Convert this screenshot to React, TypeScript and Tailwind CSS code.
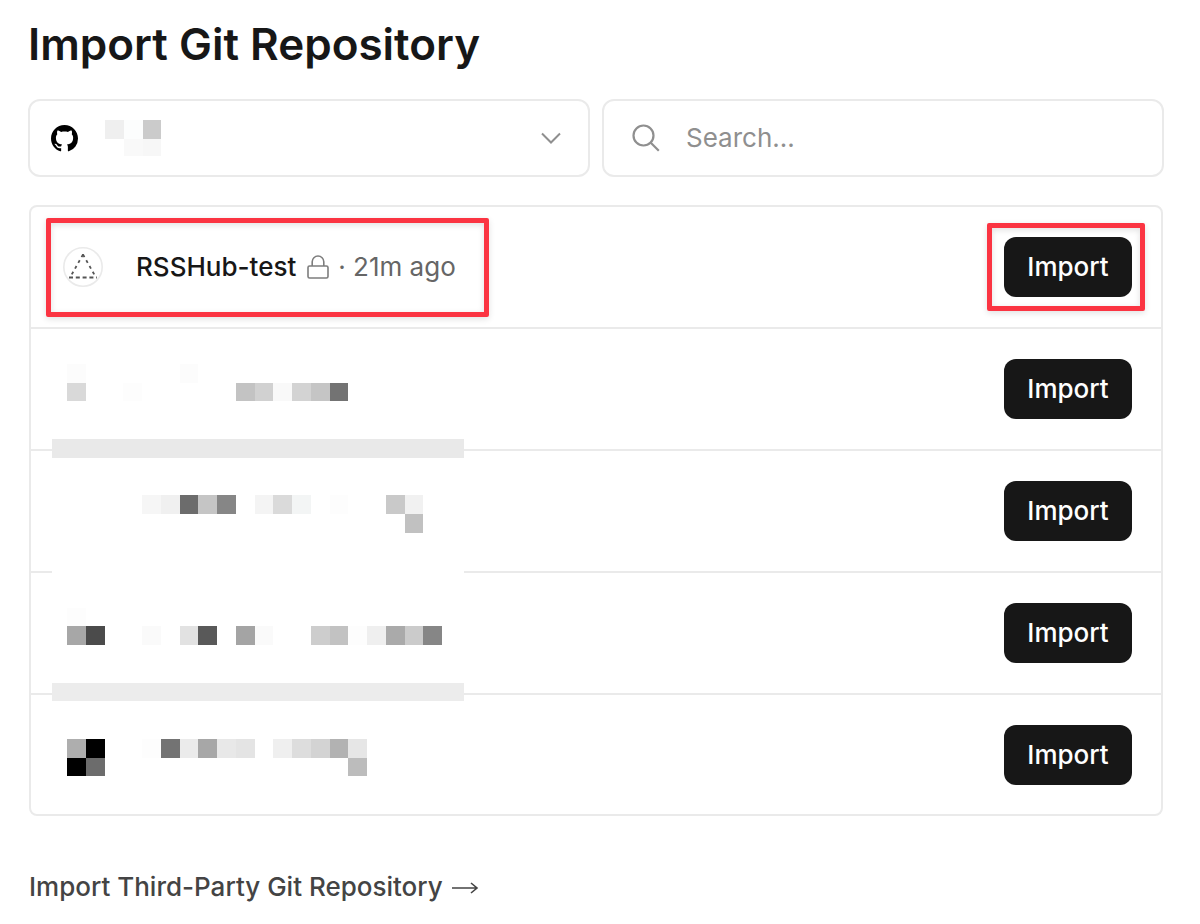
import React from 'react';

type Cell = [col: number, row: number, fill: string];

// Pixelated blocks hiding the account name
const accountCells: Cell[] = [
  [0, 0, '#efefef'],
  [1, 0, '#fcfdfd'],
  [2, 0, '#cbcbcb'],
  [1, 1, '#f9f9f9'],
  [2, 1, '#f7f7f7'],
];

// Pixelated blocks hiding the private repositories
const repoCells: Cell[] = [
  [0, 0, '#fcfcfc'],
  [6, 0, '#fcfcfc'],
  [0, 1, '#d9d9d9'],
  [3, 1, '#fdfdfd'],
  [9, 1, '#c3c3c3'],
  [10, 1, '#d1d1d1'],
  [11, 1, '#f9f9f9'],
  [12, 1, '#d3d3d3'],
  [13, 1, '#c5c5c5'],
  [14, 1, '#737373'],
  [4, 7, '#f6f6f6'],
  [5, 7, '#f0f0f0'],
  [6, 7, '#6c6c6c'],
  [7, 7, '#c5c5c5'],
  [8, 7, '#868686'],
  [10, 7, '#f4f4f4'],
  [11, 7, '#dadada'],
  [12, 7, '#f3f5f5'],
  [14, 7, '#fdfdfd'],
  [17, 7, '#c9c9c9'],
  [18, 7, '#f1f1f1'],
  [18, 8, '#c1c1c1'],
  [0, 13, '#fdfdfd'],
  [0, 14, '#a7a7a7'],
  [1, 14, '#4b4b4b'],
  [4, 14, '#fafafa'],
  [6, 14, '#e2e2e2'],
  [7, 14, '#595959'],
  [9, 14, '#a4a4a4'],
  [10, 14, '#fafafa'],
  [13, 14, '#cdcdcd'],
  [14, 14, '#c2c2c2'],
  [15, 14, '#fdfdfd'],
  [16, 14, '#efefef'],
  [17, 14, '#aaaaaa'],
  [18, 14, '#cbcbcb'],
  [19, 14, '#868686'],
  [0, 20, '#aeaeae'],
  [1, 20, '#000000'],
  [0, 21, '#000000'],
  [1, 21, '#6c6c6c'],
  [4, 20, '#fdfdfd'],
  [5, 20, '#737373'],
  [6, 20, '#ebebeb'],
  [7, 20, '#a7a7a7'],
  [8, 20, '#e8e8e8'],
  [9, 20, '#e4e4e4'],
  [11, 20, '#efefef'],
  [12, 20, '#dddddd'],
  [13, 20, '#d3d3d3'],
  [14, 20, '#b2b2b2'],
  [15, 20, '#e6e6e6'],
  [15, 21, '#bcbcbc'],
];

const Cells: React.FC<{ cells: Cell[] }> = ({ cells }) => (
  <>
    {cells.map(([col, row, fill]) => (
      <rect key={`${col}-${row}`} x={col} y={row} width="1" height="1" fill={fill} />
    ))}
  </>
);

const GithubMark: React.FC = () => (
  <svg className="size-[27px] shrink-0" viewBox="0 0 16 16" aria-hidden="true">
    <path
      fill="#000"
      d="M8 0C3.58 0 0 3.58 0 8c0 3.54 2.29 6.53 5.47 7.59.4.07.55-.17.55-.38 0-.19-.01-.82-.01-1.49-2.01.37-2.53-.49-2.69-.94-.09-.23-.48-.94-.82-1.13-.28-.15-.68-.52-.01-.53.63-.01 1.08.58 1.23.82.72 1.21 1.87.87 2.33.66.07-.52.28-.87.51-1.07-1.78-.2-3.64-.89-3.64-3.95 0-.87.31-1.59.82-2.15-.08-.2-.36-1.02.08-2.12 0 0 .67-.21 2.2.82.64-.18 1.32-.27 2-.27.68 0 1.36.09 2 .27 1.53-1.04 2.2-.82 2.2-.82.44 1.1.16 1.92.08 2.12.51.56.82 1.27.82 2.15 0 3.07-1.87 3.75-3.65 3.95.29.25.54.73.54 1.48 0 1.07-.01 1.93-.01 2.2 0 .21.15.46.55.38A8.013 8.013 0 0016 8c0-4.42-3.58-8-8-8z"
    />
  </svg>
);

const ImportButton: React.FC = () => (
  <button
    type="button"
    className="h-[60px] w-32 rounded-xl bg-[#171717] text-[26px] leading-8 font-medium text-white hover:bg-[#383838]"
  >
    Import
  </button>
);

const App: React.FC = () => {
  return (
    <main className="bg-white pt-4 pr-9 pb-5 pl-7 font-['Inter',sans-serif] text-[#171717]">
      <h1 className="text-[44px] leading-14 font-semibold">Import Git Repository</h1>

      {/* Account and search */}
      <div className="mt-[27px] grid grid-cols-2 gap-3">
        <div className="relative flex h-[78px] items-center rounded-xl border-2 border-[#eaeaea] px-[21px]">
          <GithubMark />
          <select
            aria-label="Git account"
            className="absolute inset-0 size-full cursor-pointer appearance-none rounded-xl bg-transparent"
          >
            <option value="github"></option>
          </select>
          <svg
            className="ml-[27px] h-9 w-14"
            viewBox="0 0 3 1.9"
            preserveAspectRatio="xMinYMin slice"
            shapeRendering="crispEdges"
            aria-hidden="true"
          >
            <Cells cells={accountCells} />
          </svg>
          <svg
            className="mr-[6px] ml-auto h-3 w-5"
            viewBox="0 0 20 12"
            fill="none"
            stroke="#8f8f8f"
            strokeWidth="2"
            aria-hidden="true"
          >
            <path d="M1 1.5l9 9 9-9" />
          </svg>
        </div>

        <label className="flex h-[78px] items-center rounded-xl border-2 border-[#eaeaea] px-7">
          <svg
            className="size-7 shrink-0"
            viewBox="0 0 28 28"
            fill="none"
            stroke="#8f8f8f"
            strokeWidth="2.2"
            aria-hidden="true"
          >
            <circle cx="11.5" cy="11.5" r="10" />
            <path d="M18.5 18.5l8.3 8.3" />
          </svg>
          <input
            type="text"
            aria-label="Search repositories"
            placeholder="Search..."
            className="ml-[26px] w-full min-w-0 bg-transparent text-[26px] leading-8 outline-none placeholder:text-[#8f8f8f]"
          />
        </label>
      </div>

      {/* Repository list */}
      <div className="relative mx-px mt-7 rounded-lg border-2 border-[#eaeaea]">
        <ul className="divide-y-2 divide-[#eaeaea]">
          <li className="relative flex h-[122px] items-center pr-[29px] pl-8">
            <svg className="size-10 shrink-0" viewBox="0 0 40 40" fill="none" aria-hidden="true">
              <circle cx="20" cy="20" r="19.2" fill="#fff" stroke="#eaeaea" strokeWidth="1.6" />
              <path d="M6 30.5h28" stroke="#555" strokeWidth="1.8" strokeDasharray="4 2.8" />
              <path
                d="M20 7.5L7 30.5M20 7.5l13 23"
                stroke="#555"
                strokeWidth="1.8"
                strokeDasharray="3 3.6"
              />
            </svg>
            <p className="ml-[33px] flex items-center text-[26px] leading-8 text-[#666]">
              <span className="font-medium text-[#171717]">RSSHub-test</span>
              <svg
                className="mr-2 ml-2.5 size-6"
                viewBox="0 0 24 24"
                fill="none"
                stroke="#7d7d7d"
                strokeWidth="1.6"
                aria-label="Private"
              >
                <rect x="2" y="11" width="20" height="12" rx="1.6" />
                <path d="M6.2 11V6.8a5.8 5.8 0 0 1 11.6 0V11" />
              </svg>
              <span>· 21m ago</span>
            </p>
            <div className="ml-auto">
              <ImportButton />
            </div>
            {/* Highlights over the row */}
            <span className="pointer-events-none absolute top-[11px] left-[15px] h-[99px] w-[443px] rounded-xs border-5 border-[#fb3442] shadow-[0_2px_6px_rgba(0,0,0,0.12),inset_0_2px_6px_rgba(0,0,0,0.12)]" />
            <span className="pointer-events-none absolute top-4 right-4 h-[88px] w-[158px] rounded-xs border-5 border-[#fb3442] shadow-[0_2px_6px_rgba(0,0,0,0.12),inset_0_2px_6px_rgba(0,0,0,0.12)]" />
          </li>
          {[1, 2, 3, 4].map((row) => (
            <li key={row} className="flex h-[122px] items-center justify-end pr-[29px] last:h-[119px]">
              <ImportButton />
            </li>
          ))}
        </ul>
        <svg
          className="pointer-events-none absolute top-[138px] left-[21px] h-[450px] w-[412px]"
          viewBox="-0.8 -1 21.97 24"
          shapeRendering="crispEdges"
          aria-hidden="true"
        >
          <rect x="-0.8" y="-1" width="21.97" height="24" fill="#fff" />
          <rect x="-0.8" y="4" width="21.97" height="1" fill="#e9e9e9" />
          <rect x="-0.8" y="17" width="21.97" height="1" fill="#ececec" />
          <Cells cells={repoCells} />
        </svg>
      </div>

      <a
        href="#third-party"
        className="mt-[55px] ml-px inline-flex items-center text-[26px] leading-8 font-medium text-[#444] hover:text-[#171717]"
      >
        Import Third-Party Git Repository
        <svg
          className="ml-2 h-4 w-7"
          viewBox="0 0 28 16"
          fill="none"
          stroke="#444"
          strokeWidth="1.6"
          aria-hidden="true"
        >
          <path d="M1 9h25M20 4l6 5-6 5" />
        </svg>
      </a>
    </main>
  );
};

export default App;
